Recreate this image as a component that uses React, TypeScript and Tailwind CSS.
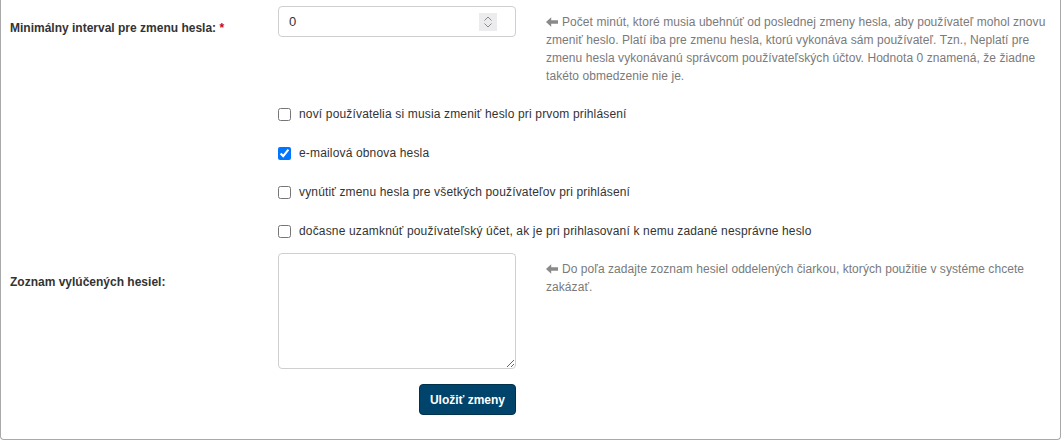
import React from "react";

function ArrowLeft() {
  return (
    <svg viewBox="0 0 12 10" className="mr-[4px] inline-block h-[10px] w-[12px] align-[-1px]" aria-hidden="true">
      <path d="M0 5 L5.2 0.3 L5.2 3.2 L12 3.2 L12 6.8 L5.2 6.8 L5.2 9.7 Z" fill="#8a8a8a" />
    </svg>
  );
}

function Spinner() {
  return (
    <div className="flex h-[18px] w-[18px] flex-col items-center justify-center gap-[2px] bg-[#ececef]">
      <svg viewBox="0 0 8 5" className="h-[5px] w-[8px]">
        <path d="M0.5 4.5 L4 1 L7.5 4.5" fill="none" stroke="#8a8a8f" strokeWidth="1" />
      </svg>
      <svg viewBox="0 0 8 5" className="h-[5px] w-[8px]">
        <path d="M0.5 0.5 L4 4 L7.5 0.5" fill="none" stroke="#8a8a8f" strokeWidth="1" />
      </svg>
    </div>
  );
}

const options = [
  { label: "noví používatelia si musia zmeniť heslo pri prvom prihlásení", checked: false },
  { label: "e-mailová obnova hesla", checked: true },
  { label: "vynútiť zmenu hesla pre všetkých používateľov pri prihlásení", checked: false },
  { label: "dočasne uzamknúť používateľský účet, ak je pri prihlasovaní k nemu zadané nesprávne heslo", checked: false },
];

export default function App() {
  return (
    <div className="min-h-screen bg-white font-['Liberation_Sans',Arial,sans-serif] text-[12px] leading-[18px] text-[#333]">
      <div className="mb-[1px] rounded-b-[4px] border-x border-b border-[#a9a9a9] pb-[24px] pl-[9px] pr-[8px] pt-[6px]">
        <div className="flex items-start">
          <label className="w-[268px] shrink-0 pt-[13px] font-bold">
            Minimálny interval pre zmenu hesla: <span className="text-[#d0021b]">*</span>
          </label>
          <div className="flex h-[31px] w-[238px] shrink-0 items-center justify-between rounded-[4px] border border-[#cfcfcf] pl-[10px] pr-[18px] text-[13px]">
            <span>0</span>
            <Spinner />
          </div>
          <p className="ml-[30px] flex-1 pt-[7px] tracking-[0.06px] text-[#7a7a7a]">
            <ArrowLeft />
            Počet minút, ktoré musia ubehnúť od poslednej zmeny hesla, aby používateľ mohol znovu zmeniť heslo. Platí iba pre zmenu hesla, ktorú vykonáva sám používateľ. Tzn., Neplatí pre zmenu hesla vykonávanú správcom používateľských účtov. Hodnota 0 znamená, že žiadne takéto obmedzenie nie je.
          </p>
        </div>

        <div className="mt-[20px] flex flex-col gap-[21px] pl-[268px]">
          {options.map((o) => (
            <label key={o.label} className="flex h-[18px] items-center">
              <input type="checkbox" defaultChecked={o.checked} className="m-0 h-[13px] w-[13px]" />
              <span className="ml-[8px] tracking-[0.16px]">{o.label}</span>
            </label>
          ))}
        </div>

        <div className="mt-[13px] flex items-start">
          <label className="w-[268px] shrink-0 pt-[20px] font-bold">Zoznam vylúčených hesiel:</label>
          <div className="flex w-[238px] shrink-0 flex-col items-end">
            <textarea className="h-[116px] w-full rounded-[4px] border border-[#cfcfcf] px-[10px] py-[6px] text-[13px] outline-none" />
            <button className="mt-[15px] h-[31px] w-[97px] rounded-[4px] border border-[#00314d] bg-[#00446b] font-bold text-white">
              Uložiť zmeny
            </button>
          </div>
          <p className="ml-[30px] flex-1 pt-[7px] tracking-[0.06px] text-[#7a7a7a]">
            <ArrowLeft />
            Do poľa zadajte zoznam hesiel oddelených čiarkou, ktorých použitie v systéme chcete zakázať.
          </p>
        </div>
      </div>
    </div>
  );
}
